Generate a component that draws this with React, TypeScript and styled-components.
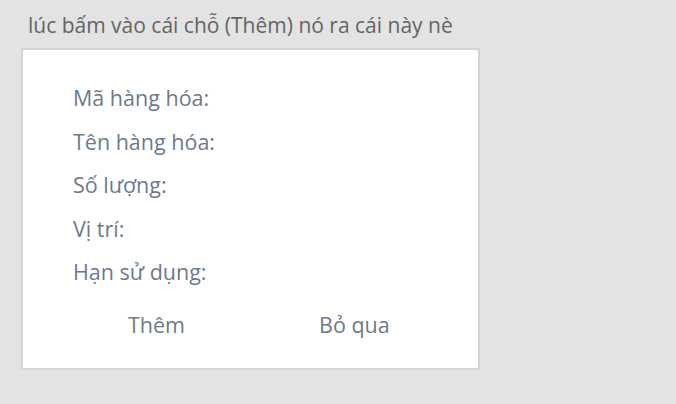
import React from "react";
import styled, { createGlobalStyle } from "styled-components";

const Global = createGlobalStyle`
  html, body { margin: 0; padding: 0; background: #e3e3e3; }
  body { font-family: "Open Sans", "Noto Sans", sans-serif; }
`;

const Page = styled.div`
  width: 676px;
  height: 404px;
  padding: 0 0 0 21px;
  box-sizing: border-box;
  display: flex;
  flex-direction: column;
`;

const Caption = styled.div`
  margin: 10px 0 0 7px;
  height: 38px;
  font-size: 21px;
  line-height: 30px;
  color: #646464;
  letter-spacing: 0px;
`;

const Panel = styled.div`
  width: 459px;
  height: 322px;
  box-sizing: border-box;
  background: #ffffff;
  border: 2px solid #d4d4d4;
  padding: 32px 0 0 50px;
  display: flex;
  flex-direction: column;
`;

const Field = styled.div`
  height: 43.5px;
  font-size: 21.5px;
  line-height: 32px;
  color: #6c7a8c;
  letter-spacing: 0px;
`;

const Actions = styled.div`
  display: flex;
  margin-top: 9px;
  padding-left: 55px;
  gap: 134px;
`;

const Action = styled.button`
  border: none;
  background: transparent;
  padding: 0;
  font-family: inherit;
  font-size: 21.5px;
  line-height: 32px;
  color: #6c7a8c;
  letter-spacing: 0px;
  cursor: pointer;
`;

const fields = ["Mã hàng hóa:", "Tên hàng hóa:", "Số lượng:", "Vị trí:", "Hạn sử dụng:"];

export default function App() {
  return (
    <Page>
      <Global />
      <Caption>lúc bấm vào cái chỗ (Thêm) nó ra cái này nè</Caption>
      <Panel>
        {fields.map((f) => (
          <Field key={f}>{f}</Field>
        ))}
        <Actions>
          <Action>Thêm</Action>
          <Action>Bỏ qua</Action>
        </Actions>
      </Panel>
    </Page>
  );
}
